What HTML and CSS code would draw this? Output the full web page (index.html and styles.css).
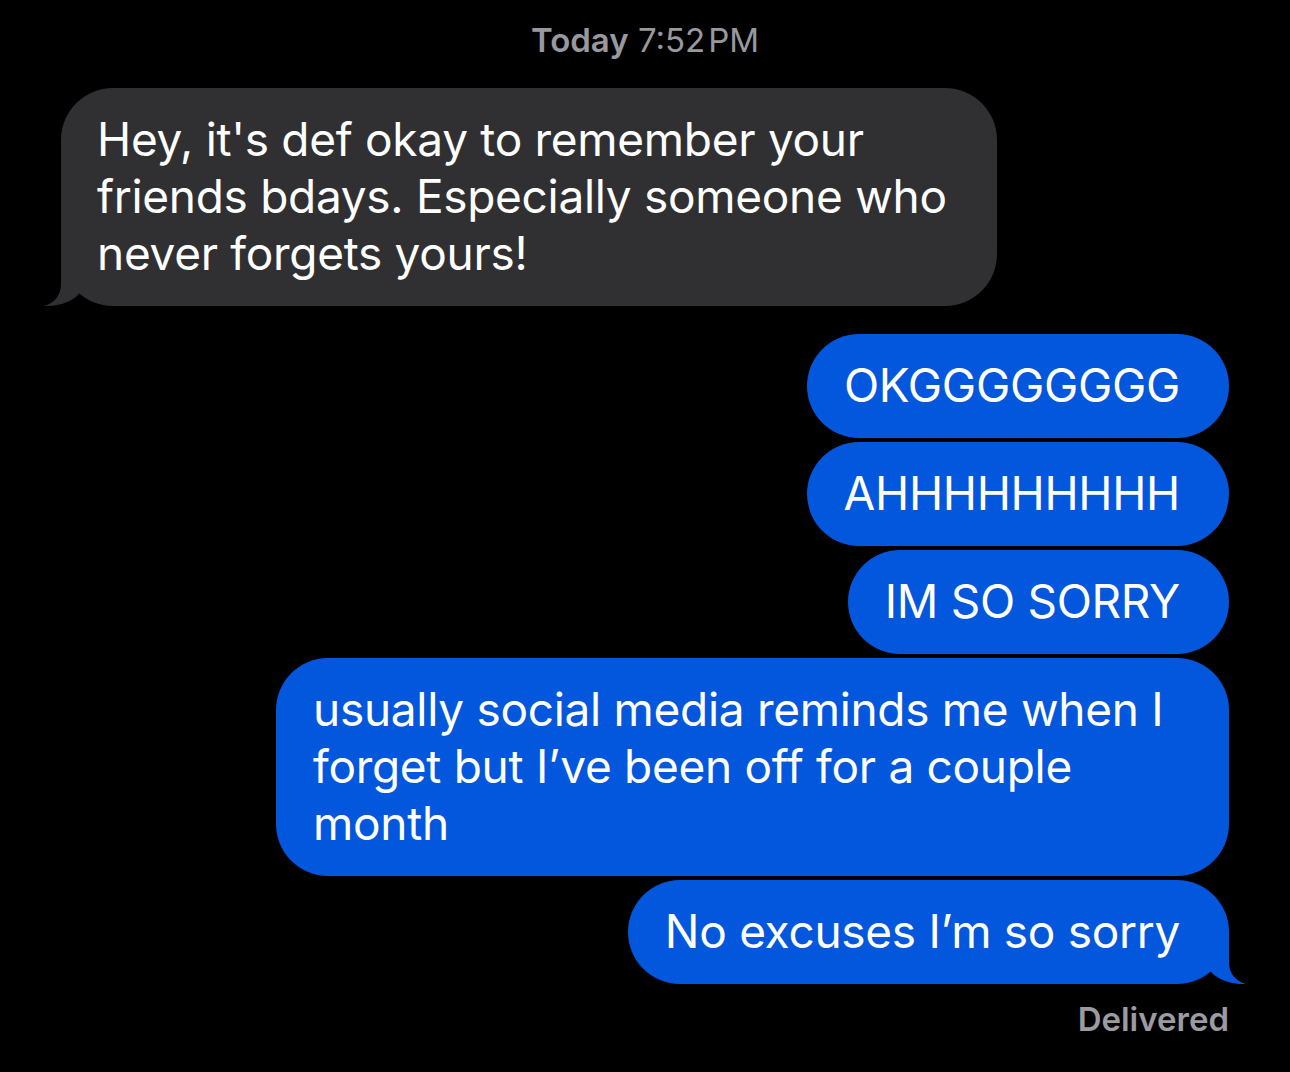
FILE: index.html
```html
<!DOCTYPE html>
<html lang="en">
<head>
    <meta charset="UTF-8">
    <meta name="viewport" content="width=device-width, initial-scale=1.0">
    <title>Messages</title>
    <link rel="stylesheet" href="styles.css">
</head>
<body>
<div class="thread">
    <div class="stamp"><span class="stamp-day">Today</span> 7:52&#8202;PM</div>

    <div class="bubble incoming">
        Hey, it's def okay to remember your friends bdays. Especially someone who never forgets yours!
        <svg class="tail tail-left" viewBox="0 0 40 52"><path d="M23 0 L23 30 C23 41 29 49 40 52 C28 52.5 14 49 6 41 L0 32 L0 0 Z"/></svg>
    </div>

    <div class="outgoing-group">
        <div class="bubble outgoing">OKGGGGGGGG</div>
        <div class="bubble outgoing">AHHHHHHHHH</div>
        <div class="bubble outgoing">IM SO SORRY</div>
        <div class="bubble outgoing">usually social media reminds me when I forget but I’ve been off for a couple month</div>
        <div class="bubble outgoing">
            No excuses I’m so sorry
            <svg class="tail tail-right" viewBox="0 0 40 52"><path d="M23 0 L23 30 C23 41 29 49 40 52 C28 52.5 14 49 6 41 L0 32 L0 0 Z"/></svg>
        </div>
    </div>

    <div class="status">Delivered</div>
</div>
</body>
</html>
```

FILE: styles.css
```css
body {
    margin: 0;
    background-color: #000000;
    font-family: Inter, "Noto Sans", sans-serif;
    color: #ffffff;
}

.thread {
    display: flex;
    flex-direction: column;
    padding: 22px 61px 0 61px;
}

.stamp {
    align-self: center;
    font-size: 33px;
    line-height: 36px;
    color: #98989f;
}

.stamp-day {
    font-weight: 600;
}

.bubble {
    position: relative;
    width: fit-content;
    max-width: 953px;
    box-sizing: border-box;
    font-size: 46px;
    line-height: 57px;
    letter-spacing: -0.3px;
    border-radius: 52px;
}

.incoming {
    align-self: flex-start;
    max-width: 936px;
    margin-top: 30px;
    padding: 23px 36px 24px 36px;
    background-color: #303032;
}

.outgoing-group {
    display: flex;
    flex-direction: column;
    align-items: flex-end;
    gap: 4px;
    margin-top: 28px;
}

.outgoing {
    padding: 23px 49px 24px 37px;
    background-color: #0257dc;
}

/* little curled tail under the last bubble of a run */
.tail {
    position: absolute;
    bottom: 0;
    width: 40px;
    height: 52px;
}

.tail-right {
    right: -17px;
    fill: #0257dc;
}

.tail-left {
    left: -17px;
    fill: #303032;
    transform: scaleX(-1);
}

.status {
    align-self: flex-end;
    margin-top: 17px;
    font-size: 33px;
    line-height: 36px;
    font-weight: 600;
    color: #9b9ba2;
}
```
